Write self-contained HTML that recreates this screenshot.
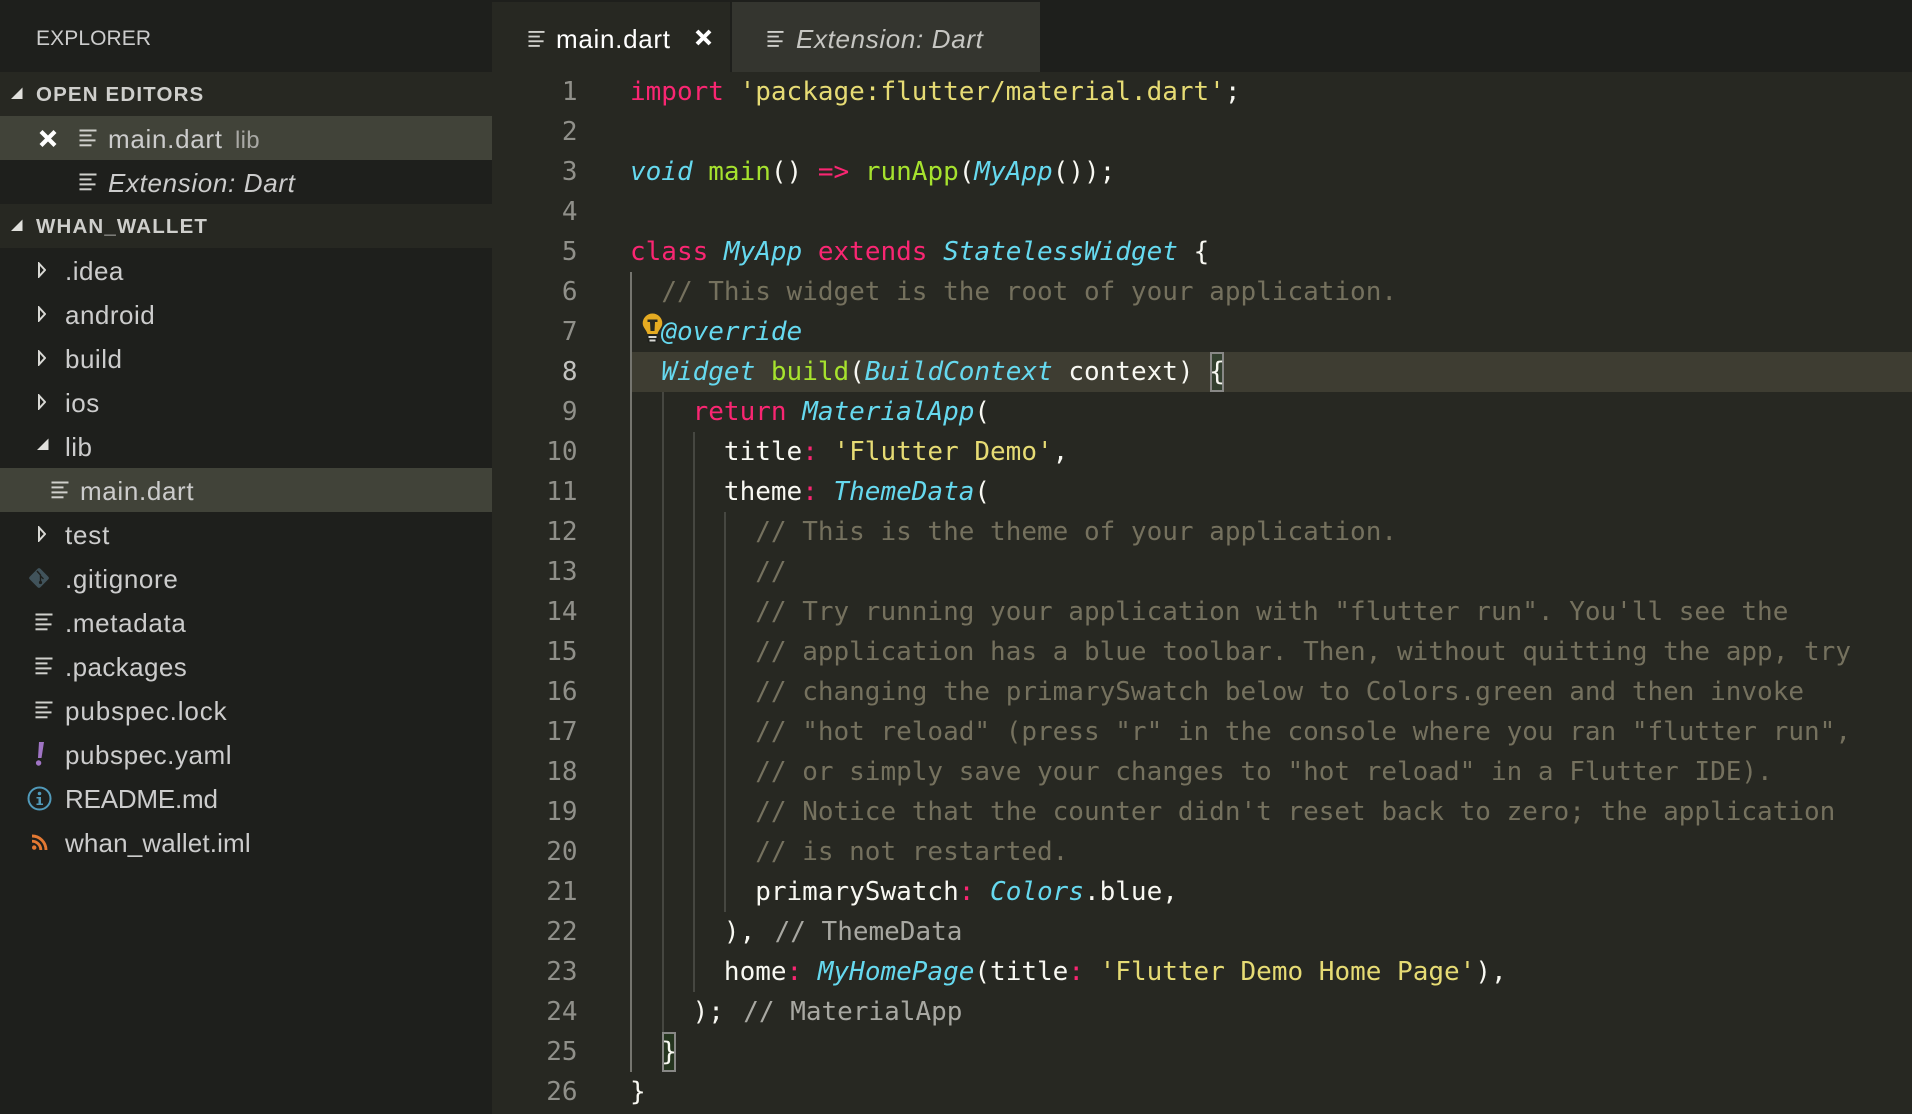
<!DOCTYPE html>
<html><head><meta charset="utf-8"><title>main.dart</title>
<style>
html,body{margin:0;padding:0;width:1912px;height:1114px;overflow:hidden;background:#272822}
*{box-sizing:border-box}
.a{position:absolute}
#side{position:absolute;left:0;top:0;width:492px;height:1114px;background:#1e1f1c;font-family:"Liberation Sans",sans-serif;color:#cccccc}
.row{position:absolute;left:0;width:492px;height:44px;line-height:44px;font-size:26px;white-space:nowrap}
.row span.t{position:absolute;top:1px;letter-spacing:.5px}
.hd{background:#272822;font-weight:bold;font-size:20.5px;letter-spacing:1.15px;color:#cfcfcc}
.hd span{position:absolute;left:36px;top:1px}
.sel{background:#414339}
#tabs{position:absolute;left:492px;top:0;width:1420px;height:72px;background:#1e1f1c;font-family:"Liberation Sans",sans-serif}
.tab{position:absolute;top:2px;height:70px;line-height:72px;font-size:26px;white-space:nowrap}
#code div.l{position:absolute;left:630px;height:40px;line-height:40px;white-space:pre;font:26px/40px "DejaVu Sans Mono","Liberation Mono",monospace;color:#f8f8f2}
.n{position:absolute;left:520px;width:57.5px;text-align:right;font:26px/40px "DejaVu Sans Mono","Liberation Mono",monospace;color:#90908a}
.k{color:#f92672}.s{color:#e6db74}.i{color:#66d9ef;font-style:italic}.f{color:#a6e22e}.c{color:#75715e}.h{color:#a8a8a2;margin-left:3.7px}
.g{position:absolute;width:2px}
</style></head><body>
<svg width="0" height="0" style="position:absolute"><defs>
<symbol id="fi" viewBox="0 0 18 18"><g fill="#d0d0cc"><rect x="0.5" y="0.5" width="17" height="2"/><rect x="0.5" y="5.4" width="12" height="2"/><rect x="0.5" y="10.4" width="16" height="2"/><rect x="0.5" y="15.3" width="12" height="2"/></g></symbol>
<symbol id="cl" viewBox="0 0 8 16"><path d="M1 1.5 L7 8 L1 14.5 Z" fill="none" stroke="#d8d8d4" stroke-width="2"/></symbol>
<symbol id="op" viewBox="0 0 12 12"><path d="M11.5 .5 V12 H0 Z" fill="#e0e0dc"/></symbol>
</defs></svg>

<div id="side">
<div class="a" style="left:36px;top:21px;line-height:36px;font-size:21px;letter-spacing:.1px;color:#cccccc">EXPLORER</div>
<div class="row hd" style="top:72px"><span>OPEN EDITORS</span><svg class="a" style="left:11px;top:15px" width="12" height="12"><use href="#op"/></svg></div>
<div class="row sel" style="top:116px">
<svg class="a" style="left:39px;top:14px" width="18" height="17" viewBox="0 0 18 17"><path d="M2 1.5 L16 15.5 M16 1.5 L2 15.5" stroke="#ffffff" stroke-width="4.2"/></svg>
<svg class="a" style="left:79px;top:13px" width="18" height="18"><use href="#fi"/></svg>
<span class="t" style="left:108px;letter-spacing:.7px">main.dart</span><span class="t" style="left:235px;top:3px;font-size:24px;color:#a9a9a5;letter-spacing:.3px">lib</span></div>
<div class="row" style="top:160px">
<svg class="a" style="left:79px;top:13px" width="18" height="18"><use href="#fi"/></svg>
<span class="t" style="left:108px;font-style:italic;letter-spacing:.65px">Extension: Dart</span></div>
<div class="row hd" style="top:204px"><span>WHAN_WALLET</span><svg class="a" style="left:11px;top:15px" width="12" height="12"><use href="#op"/></svg></div>

<div class="row" style="top:248px"><svg class="a" style="left:38px;top:14px" width="8" height="16"><use href="#cl"/></svg><span class="t" style="left:65px">.idea</span></div>
<div class="row" style="top:292px"><svg class="a" style="left:38px;top:14px" width="8" height="16"><use href="#cl"/></svg><span class="t" style="left:65px">android</span></div>
<div class="row" style="top:336px"><svg class="a" style="left:38px;top:14px" width="8" height="16"><use href="#cl"/></svg><span class="t" style="left:65px">build</span></div>
<div class="row" style="top:380px"><svg class="a" style="left:38px;top:14px" width="8" height="16"><use href="#cl"/></svg><span class="t" style="left:65px">ios</span></div>
<div class="row" style="top:424px"><svg class="a" style="left:37px;top:14px" width="12" height="12"><use href="#op"/></svg><span class="t" style="left:65px">lib</span></div>
<div class="row sel" style="top:468px"><svg class="a" style="left:51px;top:13px" width="18" height="18"><use href="#fi"/></svg><span class="t" style="left:80px;letter-spacing:.65px">main.dart</span></div>
<div class="row" style="top:512px"><svg class="a" style="left:38px;top:14px" width="8" height="16"><use href="#cl"/></svg><span class="t" style="left:65px;letter-spacing:.8px">test</span></div>
<div class="row" style="top:556px"><svg class="a" style="left:28px;top:11px" width="22" height="22" viewBox="0 0 22 22"><rect x="3.5" y="3.5" width="15" height="15" rx="2" transform="rotate(45 11 11)" fill="#41535b"/><path d="M9 4 L12.5 8 V15 M12.5 9 L15.5 12" stroke="#1e1f1c" stroke-width="1.4" fill="none"/><circle cx="12.5" cy="15.5" r="1.6" fill="#1e1f1c"/></svg><span class="t" style="left:65px;letter-spacing:.65px">.gitignore</span></div>
<div class="row" style="top:600px"><svg class="a" style="left:35px;top:13px" width="18" height="18"><use href="#fi"/></svg><span class="t" style="left:65px;letter-spacing:.65px">.metadata</span></div>
<div class="row" style="top:644px"><svg class="a" style="left:35px;top:13px" width="18" height="18"><use href="#fi"/></svg><span class="t" style="left:65px;letter-spacing:.4px">.packages</span></div>
<div class="row" style="top:688px"><svg class="a" style="left:35px;top:13px" width="18" height="18"><use href="#fi"/></svg><span class="t" style="left:65px;letter-spacing:.9px">pubspec.lock</span></div>
<div class="row" style="top:732px"><svg class="a" style="left:35px;top:9px" width="10" height="26" viewBox="0 0 10 26"><path d="M4 1 H9 L6.5 17 H3 Z" fill="#a074c4"/><circle cx="3.6" cy="22" r="2.7" fill="#a074c4"/></svg><span class="t" style="left:65px;letter-spacing:.55px">pubspec.yaml</span></div>
<div class="row" style="top:776px"><svg class="a" style="left:27px;top:10px" width="25" height="25" viewBox="0 0 25 25"><circle cx="12.5" cy="12.5" r="11" fill="none" stroke="#519aba" stroke-width="2"/><circle cx="12.5" cy="7.5" r="1.8" fill="#519aba"/><path d="M9.5 11 H14 V17.5 H16 V19 H9.5 V17.5 H11.5 V12.5 H9.5 Z" fill="#519aba"/></svg><span class="t" style="left:65px;letter-spacing:-.2px">README.md</span></div>
<div class="row" style="top:820px"><svg class="a" style="left:31px;top:14px" width="17" height="17" viewBox="0 0 17 17"><circle cx="3.2" cy="13.6" r="2.2" fill="#e37933"/><path d="M1 7.2 A8.8 8.8 0 0 1 9.8 16 M1 2 A14 14 0 0 1 15 16" fill="none" stroke="#e37933" stroke-width="2.9"/></svg><span class="t" style="left:65px;letter-spacing:.15px">whan_wallet.iml</span></div>
</div>

<div id="tabs">
<div class="tab" style="left:0;width:238px;background:#272822;color:#fff">
<svg class="a" style="left:36px;top:28px" width="17" height="18"><use href="#fi"/></svg>
<span class="a" style="left:64px;top:1px;letter-spacing:.7px">main.dart</span>
<svg class="a" style="left:203px;top:27px" width="17" height="17" viewBox="0 0 17 17"><path d="M2 2 L15 15 M15 2 L2 15" stroke="#fff" stroke-width="4"/></svg>
</div>
<div class="tab" style="left:240px;width:308px;background:#34352f;color:#c6c6c2">
<svg class="a" style="left:35px;top:28px" width="17" height="18"><use href="#fi"/></svg>
<span class="a" style="left:64px;top:1px;font-style:italic;letter-spacing:.65px">Extension: Dart</span>
</div>
</div>

<div id="code">
<div class="a" style="left:631px;top:352px;width:1281px;height:40px;background:#3e3d32"></div>
<div class="g" style="left:630px;top:272px;height:800px;background:#75756f"></div>
<div class="g" style="left:662px;top:392px;height:640px;background:#464741"></div>
<div class="g" style="left:693px;top:432px;height:560px;background:#464741"></div>
<div class="g" style="left:724px;top:512px;height:400px;background:#464741"></div>
<div class="a" style="left:1210px;top:352px;width:14px;height:40px;border:2px solid #888886;background:#33402f"></div>
<div class="a" style="left:662px;top:1032px;width:14px;height:40px;border:2px solid #888886;background:#25351f"></div>
<svg class="a" style="left:642px;top:313px" width="21" height="30" viewBox="0 0 21 30"><path d="M10.5 .5 A9.8 9.8 0 0 1 20.3 10.3 C20.3 14.5 16.5 17 15.5 21 H5.5 C4.5 17 .7 14.5 .7 10.3 A9.8 9.8 0 0 1 10.5 .5Z" fill="#e5ab22"/><path d="M5.5 6.5 H15.5 V9 H13 L12.5 18 H8.5 L8 9 H5.5 Z" fill="#272822"/><rect x="5.5" y="22" width="10" height="7.5" rx="2" fill="#1e1f1c"/><path d="M6.5 24 H14.5 M7.5 27.5 H13.5" stroke="#d8d8d4" stroke-width="2"/></svg>

<div class="n" style="top:72px">1</div><div class="n" style="top:112px">2</div><div class="n" style="top:152px">3</div><div class="n" style="top:192px">4</div><div class="n" style="top:232px">5</div><div class="n" style="top:272px">6</div><div class="n" style="top:312px">7</div><div class="n" style="top:352px;color:#c2c2bf">8</div><div class="n" style="top:392px">9</div><div class="n" style="top:432px">10</div><div class="n" style="top:472px">11</div><div class="n" style="top:512px">12</div><div class="n" style="top:552px">13</div><div class="n" style="top:592px">14</div><div class="n" style="top:632px">15</div><div class="n" style="top:672px">16</div><div class="n" style="top:712px">17</div><div class="n" style="top:752px">18</div><div class="n" style="top:792px">19</div><div class="n" style="top:832px">20</div><div class="n" style="top:872px">21</div><div class="n" style="top:912px">22</div><div class="n" style="top:952px">23</div><div class="n" style="top:992px">24</div><div class="n" style="top:1032px">25</div><div class="n" style="top:1072px">26</div>

<div class="l" style="top:72px"><span class="k">import</span> <span class="s">'package:flutter/material.dart'</span>;</div>
<div class="l" style="top:152px"><span class="i">void</span> <span class="f">main</span>() <span class="k">=&gt;</span> <span class="f">runApp</span>(<span class="i">MyApp</span>());</div>
<div class="l" style="top:232px"><span class="k">class</span> <span class="i">MyApp</span> <span class="k">extends</span> <span class="i">StatelessWidget</span> {</div>
<div class="l" style="top:272px">  <span class="c">// This widget is the root of your application.</span></div>
<div class="l" style="top:312px">  <span class="i">@override</span></div>
<div class="l" style="top:352px">  <span class="i">Widget</span> <span class="f">build</span>(<span class="i">BuildContext</span> context) {</div>
<div class="l" style="top:392px">    <span class="k">return</span> <span class="i">MaterialApp</span>(</div>
<div class="l" style="top:432px">      title<span class="k">:</span> <span class="s">'Flutter Demo'</span>,</div>
<div class="l" style="top:472px">      theme<span class="k">:</span> <span class="i">ThemeData</span>(</div>
<div class="l c" style="top:512px">        <span class="c">// This is the theme of your application.</span></div>
<div class="l" style="top:552px">        <span class="c">//</span></div>
<div class="l" style="top:592px">        <span class="c">// Try running your application with "flutter run". You'll see the</span></div>
<div class="l" style="top:632px">        <span class="c">// application has a blue toolbar. Then, without quitting the app, try</span></div>
<div class="l" style="top:672px">        <span class="c">// changing the primarySwatch below to Colors.green and then invoke</span></div>
<div class="l" style="top:712px">        <span class="c">// "hot reload" (press "r" in the console where you ran "flutter run",</span></div>
<div class="l" style="top:752px">        <span class="c">// or simply save your changes to "hot reload" in a Flutter IDE).</span></div>
<div class="l" style="top:792px">        <span class="c">// Notice that the counter didn't reset back to zero; the application</span></div>
<div class="l" style="top:832px">        <span class="c">// is not restarted.</span></div>
<div class="l" style="top:872px">        primarySwatch<span class="k">:</span> <span class="i">Colors</span>.blue,</div>
<div class="l" style="top:912px">      ), <span class="h">// ThemeData</span></div>
<div class="l" style="top:952px">      home<span class="k">:</span> <span class="i">MyHomePage</span>(title<span class="k">:</span> <span class="s">'Flutter Demo Home Page'</span>),</div>
<div class="l" style="top:992px">    ); <span class="h">// MaterialApp</span></div>
<div class="l" style="top:1032px">  }</div>
<div class="l" style="top:1072px">}</div>
</div>
</body></html>
